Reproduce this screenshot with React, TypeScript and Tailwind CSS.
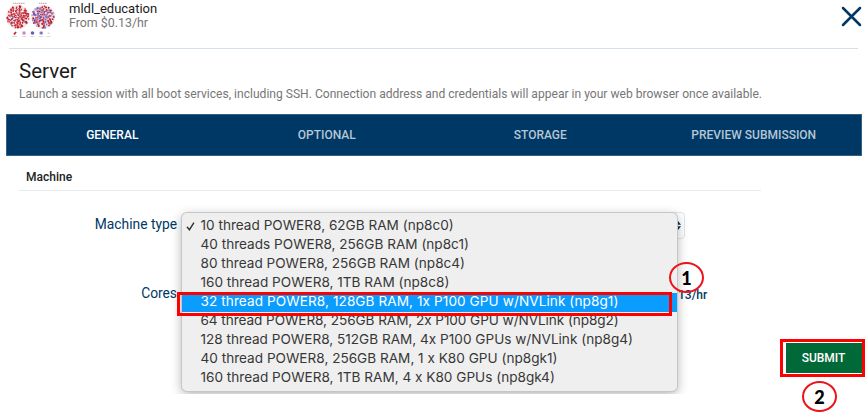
import React from "react";

const tabs = ["GENERAL", "OPTIONAL", "STORAGE", "PREVIEW SUBMISSION"];

const machines = [
  "10 thread POWER8, 62GB RAM (np8c0)",
  "40 threads POWER8, 256GB RAM (np8c1)",
  "80 thread POWER8, 256GB RAM (np8c4)",
  "160 thread POWER8, 1TB RAM (np8c8)",
  "32 thread POWER8, 128GB RAM, 1x P100 GPU w/NVLink (np8g1)",
  "64 thread POWER8, 256GB RAM, 2x P100 GPU w/NVLink (np8g2)",
  "128 thread POWER8, 512GB RAM, 4x P100 GPUs w/NVLink (np8g4)",
  "40 thread POWER8, 256GB RAM, 1 x K80 GPU (np8gk1)",
  "160 thread POWER8, 1TB RAM, 4 x K80 GPUs (np8gk4)",
];

// Repeatable pseudo-random value between 0 and 1
function noise(n: number) {
  const v = Math.sin(n * 127.1) * 43758.5453;
  return v - Math.floor(v);
}

// Blood cells scattered inside each smear circle
function Cells({ cx, cy, blue }: { cx: number; cy: number; blue: number }) {
  const reds = ["#c41f2a", "#cf4049", "#b01c26"];
  const blues = ["#8f8ad6", "#6a6cc4", "#aeb0ea"];
  return (
    <g>
      <circle cx={cx} cy={cy} r={11.9} fill="#f7e4e4" />
      {Array.from({ length: 150 }, (_, i) => {
        const r = 11.1 * Math.sqrt((i + noise(i + cx)) / 150);
        const a = i * 2.39996 + noise(i + 300 + cx) * 0.5;
        const isBlue = noise(i + 700 + cx) < blue;
        return (
          <circle
            key={i}
            cx={cx + r * Math.cos(a)}
            cy={cy + r * Math.sin(a)}
            r={isBlue ? 1.15 : 0.6 + noise(i + 50) * 0.4}
            fill={(isBlue ? blues : reds)[i % 3]}
          />
        );
      })}
    </g>
  );
}

function Logo() {
  return (
    <svg className="h-10 w-[60px] shrink-0" viewBox="0 0 60 40">
      <path d="M13 3.300h12M39 3.300h8" stroke="#aaa" strokeWidth="1" strokeDasharray="1.5 .4" />
      <Cells cx={18} cy={17} blue={0.05} />
      <Cells cx={43} cy={17} blue={0.32} />
      <path d="M14 34.500l2-2.500" stroke="#c52b38" strokeWidth="2" />
      <circle cx="24" cy="33" r="2" fill="#e3b3da" />
      <circle cx="24" cy="33" r="1" fill="#b874bb" />
      <circle cx="32.500" cy="33" r="1.800" fill="#6b5fb5" />
      <circle cx="41.200" cy="33" r="2.100" fill="#b3bde9" />
      <circle cx="41.200" cy="33" r="1.100" fill="#5b62b8" />
      <circle cx="48.500" cy="33.200" r="1" fill="#f2d3dd" />
      <path d="M12 36.500h5M22 36.500h4M30.500 36.500h4M39 36.500h4M46.500 36.500h4" stroke="#ccc" strokeWidth=".7" />
    </svg>
  );
}

export default function App() {
  return (
    <div className="relative h-[419px] w-[868px] overflow-hidden bg-white font-['Roboto',sans-serif]">
      <header className="ml-[9px] flex h-[49px] w-[849px] border-b border-[#d5e0ea]">
        <div className="-ml-[9px] flex">
          <Logo />
          <div className="ml-[9px] pt-px">
            <div className="text-[13px] leading-[15px] text-[#1b1b1b]">mldl_education</div>
            <div className="text-[12.4px] leading-[14px] text-[#777]">From $0.13/hr</div>
          </div>
        </div>
        <svg className="-mr-[3.5px] mt-1.5 ml-auto h-[21px] w-[21px]" viewBox="0 0 21 21">
          <path d="M2 2l17 17M19 2L2 19" stroke="#003865" strokeWidth="2.500" strokeLinecap="round" />
        </svg>
      </header>

      <section className="flex h-[65px] flex-col pt-[10px] pl-[19px]">
        <h1 className="text-[20.5px] leading-6 text-[#1b1b1b]">Server</h1>
        <p className="mt-[3px] text-[12.08px] leading-4 whitespace-nowrap text-[#777]">
          Launch a session with all boot services, including SSH. Connection address and credentials will appear in your web browser once available.
        </p>
      </section>

      <nav className="mr-1.5 ml-1.5 grid h-[42px] grid-cols-4 border border-[#315f85] bg-[#003865]">
        {tabs.map((t, i) => (
          <div
            key={t}
            className={
              i === 0
                ? "flex items-center justify-center pr-[3px] text-[12px] font-medium text-white"
                : "flex items-center justify-center pr-px text-[12px] font-medium text-[#b5c6d4]"
            }
          >
            {t}
          </div>
        ))}
      </nav>

      <div className="ml-[19px] h-[35px] w-[742px] border-b border-[#e3eaf0] pt-3 pl-[7px] text-[12px] leading-[18px] font-medium text-[#222]">
        Machine
      </div>

      <main className="w-[177px] pt-[23px] text-right text-[13.8px] leading-5 text-[#003865]">
        <div>Machine type</div>
        <div className="mt-[49px]">Cores</div>
      </main>

      {/* Select control that stays behind the open menu */}
      <div className="absolute top-[212px] left-[190px] flex h-[27px] w-[495px] items-center justify-end rounded border border-[#dfe6ec] pr-[3px]">
        <svg className="h-[13px] w-[9px]" viewBox="0 0 9 13">
          <path d="M0 5.800L4.500 0L9 5.800zM0 7.200L4.500 13L9 7.200z" fill="#003865" />
        </svg>
      </div>
      <div className="absolute top-[287px] left-[678px] text-[12px] leading-4 font-medium text-[#003865]">13/hr</div>

      {/* Open option menu */}
      <div className="absolute top-[195px] left-[160px] h-[199px] w-[540px] overflow-hidden">
        <ul className="mt-[18px] ml-[22px] h-[178px] w-[495px] rounded-[5px] bg-[#efefef] pt-[4px] font-['Inter',sans-serif] text-[13.6px] text-[#373737] shadow-[0_0_0_1px_#c6c6c6,0_3px_12px_rgba(0,0,0,0.32)]">
          {machines.map((m, i) => (
            <li
              key={m}
              className={
                i === 4
                  ? "flex h-[19px] items-center bg-[#0a9cff] pb-0.5 tracking-[0.08px] whitespace-nowrap text-white"
                  : i === 5
                    ? "flex h-[19px] items-center pb-0.5 tracking-[-0.07px] whitespace-nowrap"
                    : "flex h-[19px] items-center pb-0.5 whitespace-nowrap"
              }
            >
              <span className="flex w-[18.5px] shrink-0 pl-[4px]">
                {i === 0 && (
                  <svg className="mt-0.5 h-[9px] w-[9px]" viewBox="0 0 9 10">
                    <path d="M1 5.800L3.300 8.600L8 1.200" fill="none" stroke="#333" strokeWidth="1.600" strokeLinecap="round" />
                  </svg>
                )}
              </span>
              <span>{m}</span>
            </li>
          ))}
        </ul>
      </div>

      {/* Step markers */}
      <div className="absolute top-[292px] left-[177px] h-6 w-[495px] border-3 border-[#fe0000]" />
      <div className="absolute top-[262px] left-[669px] flex h-[31px] w-[35px] items-center justify-center rounded-[50%] border-2 border-[#ec1218] pt-px font-['Lato',sans-serif] text-[18px] font-black text-black">
        1
      </div>
      <div className="absolute top-[339px] left-[780px] flex h-[38px] w-[85px] border-3 border-[#fe0000] bg-white py-px pl-[3px]">
        <button className="w-[76px] bg-[#006937] pr-px text-[12px] font-medium text-white">SUBMIT</button>
      </div>
      <div className="absolute top-[381px] left-[802px] flex h-[31px] w-[35px] items-center justify-center rounded-[50%] border-2 border-[#ec1218] pt-px font-['Lato',sans-serif] text-[18px] font-black text-black">
        2
      </div>
    </div>
  );
}
